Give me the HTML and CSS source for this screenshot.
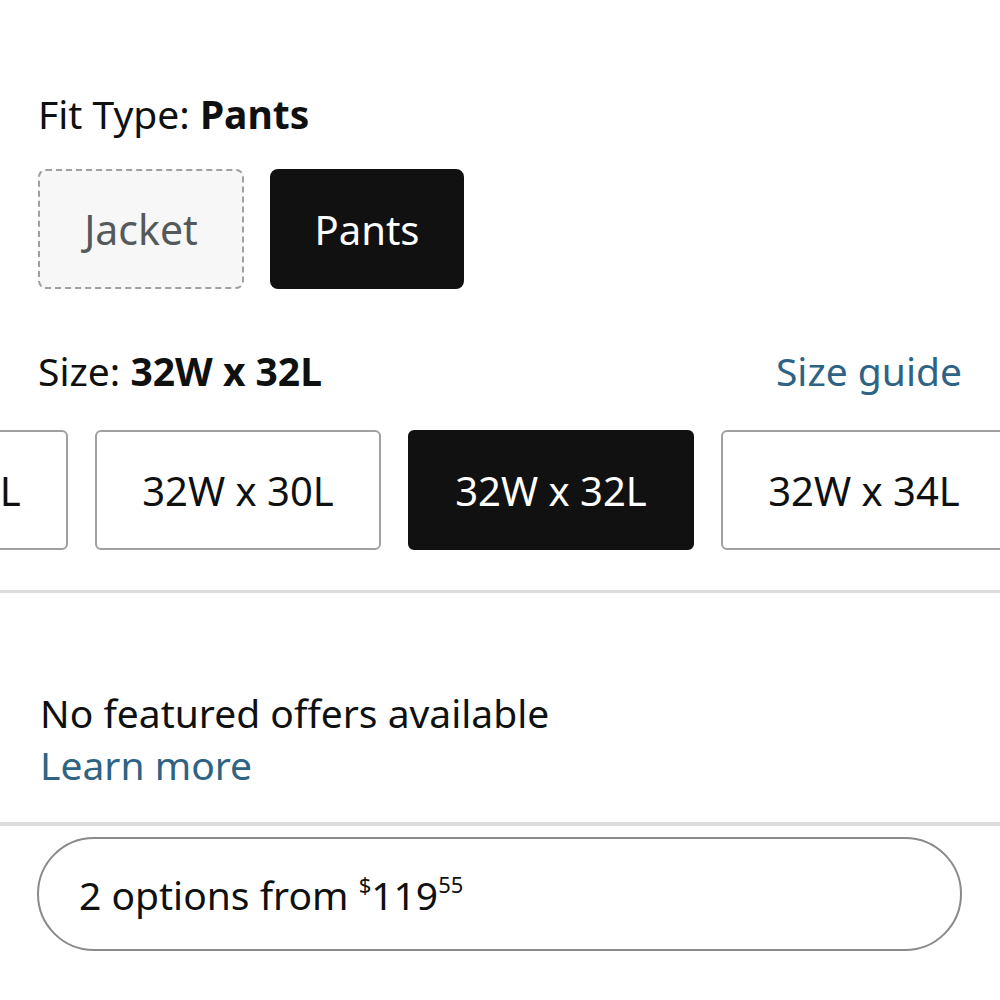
FILE: index.html
```html
<!DOCTYPE html>
<html lang="en">
<head>
  <meta charset="UTF-8">
  <meta name="viewport" content="width=device-width, initial-scale=1.0">
  <title>Fit Type and Size</title>
  <link rel="stylesheet" href="styles.css">
</head>
<body>
  <div class="page">
    <section class="fit-section">
      <div class="label">Fit Type: <b>Pants</b></div>
      <div class="fit-options">
        <button class="option unavailable">Jacket</button>
        <button class="option selected">Pants</button>
      </div>
    </section>

    <section class="size-section">
      <div class="label-row">
        <div class="label">Size: <b>32W x 32L</b></div>
        <a class="link" href="#">Size guide</a>
      </div>
      <div class="size-scroller">
        <div class="size-options">
          <button class="size">32W x 29L</button>
          <button class="size">32W x 30L</button>
          <button class="size selected">32W x 32L</button>
          <button class="size">32W x 34L</button>
        </div>
      </div>
    </section>

    <hr class="divider">

    <section class="offers">
      <div class="offers-text">No featured offers available</div>
      <a class="link" href="#">Learn more</a>
    </section>

    <hr class="divider thick">

    <div class="options-wrap">
      <button class="options-pill">2 options from <span class="price"><sup>$</sup>119<sup>55</sup></span></button>
    </div>
  </div>
</body>
</html>
```

FILE: styles.css
```css
body {
  margin: 0;
  background: #fff;
  font-family: "Noto Sans", Arial, sans-serif;
  color: #0f1111;
}

.page {
  width: 1000px;
  overflow: hidden;
}

.label {
  font-size: 39px;
  line-height: 44px;
}

.label b {
  font-weight: 700;
}

.fit-section {
  padding: 92px 0 0 38px;
}

.fit-options {
  display: flex;
  gap: 26px;
  margin-top: 33px;
}

button {
  font-family: inherit;
  cursor: pointer;
}

.option {
  height: 120px;
  font-size: 40px;
  border-radius: 8px;
  padding: 0;
}

.option.unavailable {
  width: 206px;
  background: #f7f7f7;
  color: #565959;
  border: 2px dashed #a0a0a0;
  font-size: 41px;
}

.option.selected {
  width: 194px;
  background: #111;
  color: #fff;
  border: 2px solid #111;
}

.size-section {
  margin-top: 55px;
}

.label-row {
  display: flex;
  justify-content: space-between;
  align-items: baseline;
  padding: 0 38px 0 38px;
}

.link {
  color: #2e6384;
  text-decoration: none;
  font-size: 39px;
}

.size-scroller {
  overflow: hidden;
  margin-top: 33px;
}

.size-options {
  display: flex;
  gap: 27px;
  margin-left: -218px;
}

.size {
  flex: 0 0 286px;
  height: 120px;
  background: #fff;
  border: 2px solid #a0a0a0;
  border-radius: 6px;
  font-size: 40px;
  color: #0f1111;
  padding: 0;
}

.size.selected {
  background: #111;
  border-color: #111;
  color: #fff;
}

.divider {
  margin: 40px 0 0;
  border: 0;
  height: 3px;
  background: #ddd;
}

.offers {
  padding: 94px 0 0 40px;
  display: flex;
  flex-direction: column;
  align-items: flex-start;
}

.offers-text {
  font-size: 39px;
  line-height: 52px;
}

.offers .link {
  line-height: 52px;
}

.divider.thick {
  margin-top: 31px;
  height: 4px;
}

.options-wrap {
  padding: 11px 38px 0 37px;
}

.options-pill {
  width: 100%;
  height: 114px;
  border: 2px solid #8a8a8a;
  border-radius: 57px;
  background: #fff;
  text-align: left;
  padding: 0 0 0 40px;
  font-size: 39px;
  color: #0f1111;
}

.price sup {
  font-size: 22px;
  vertical-align: 17px;
  line-height: 0;
}
```
